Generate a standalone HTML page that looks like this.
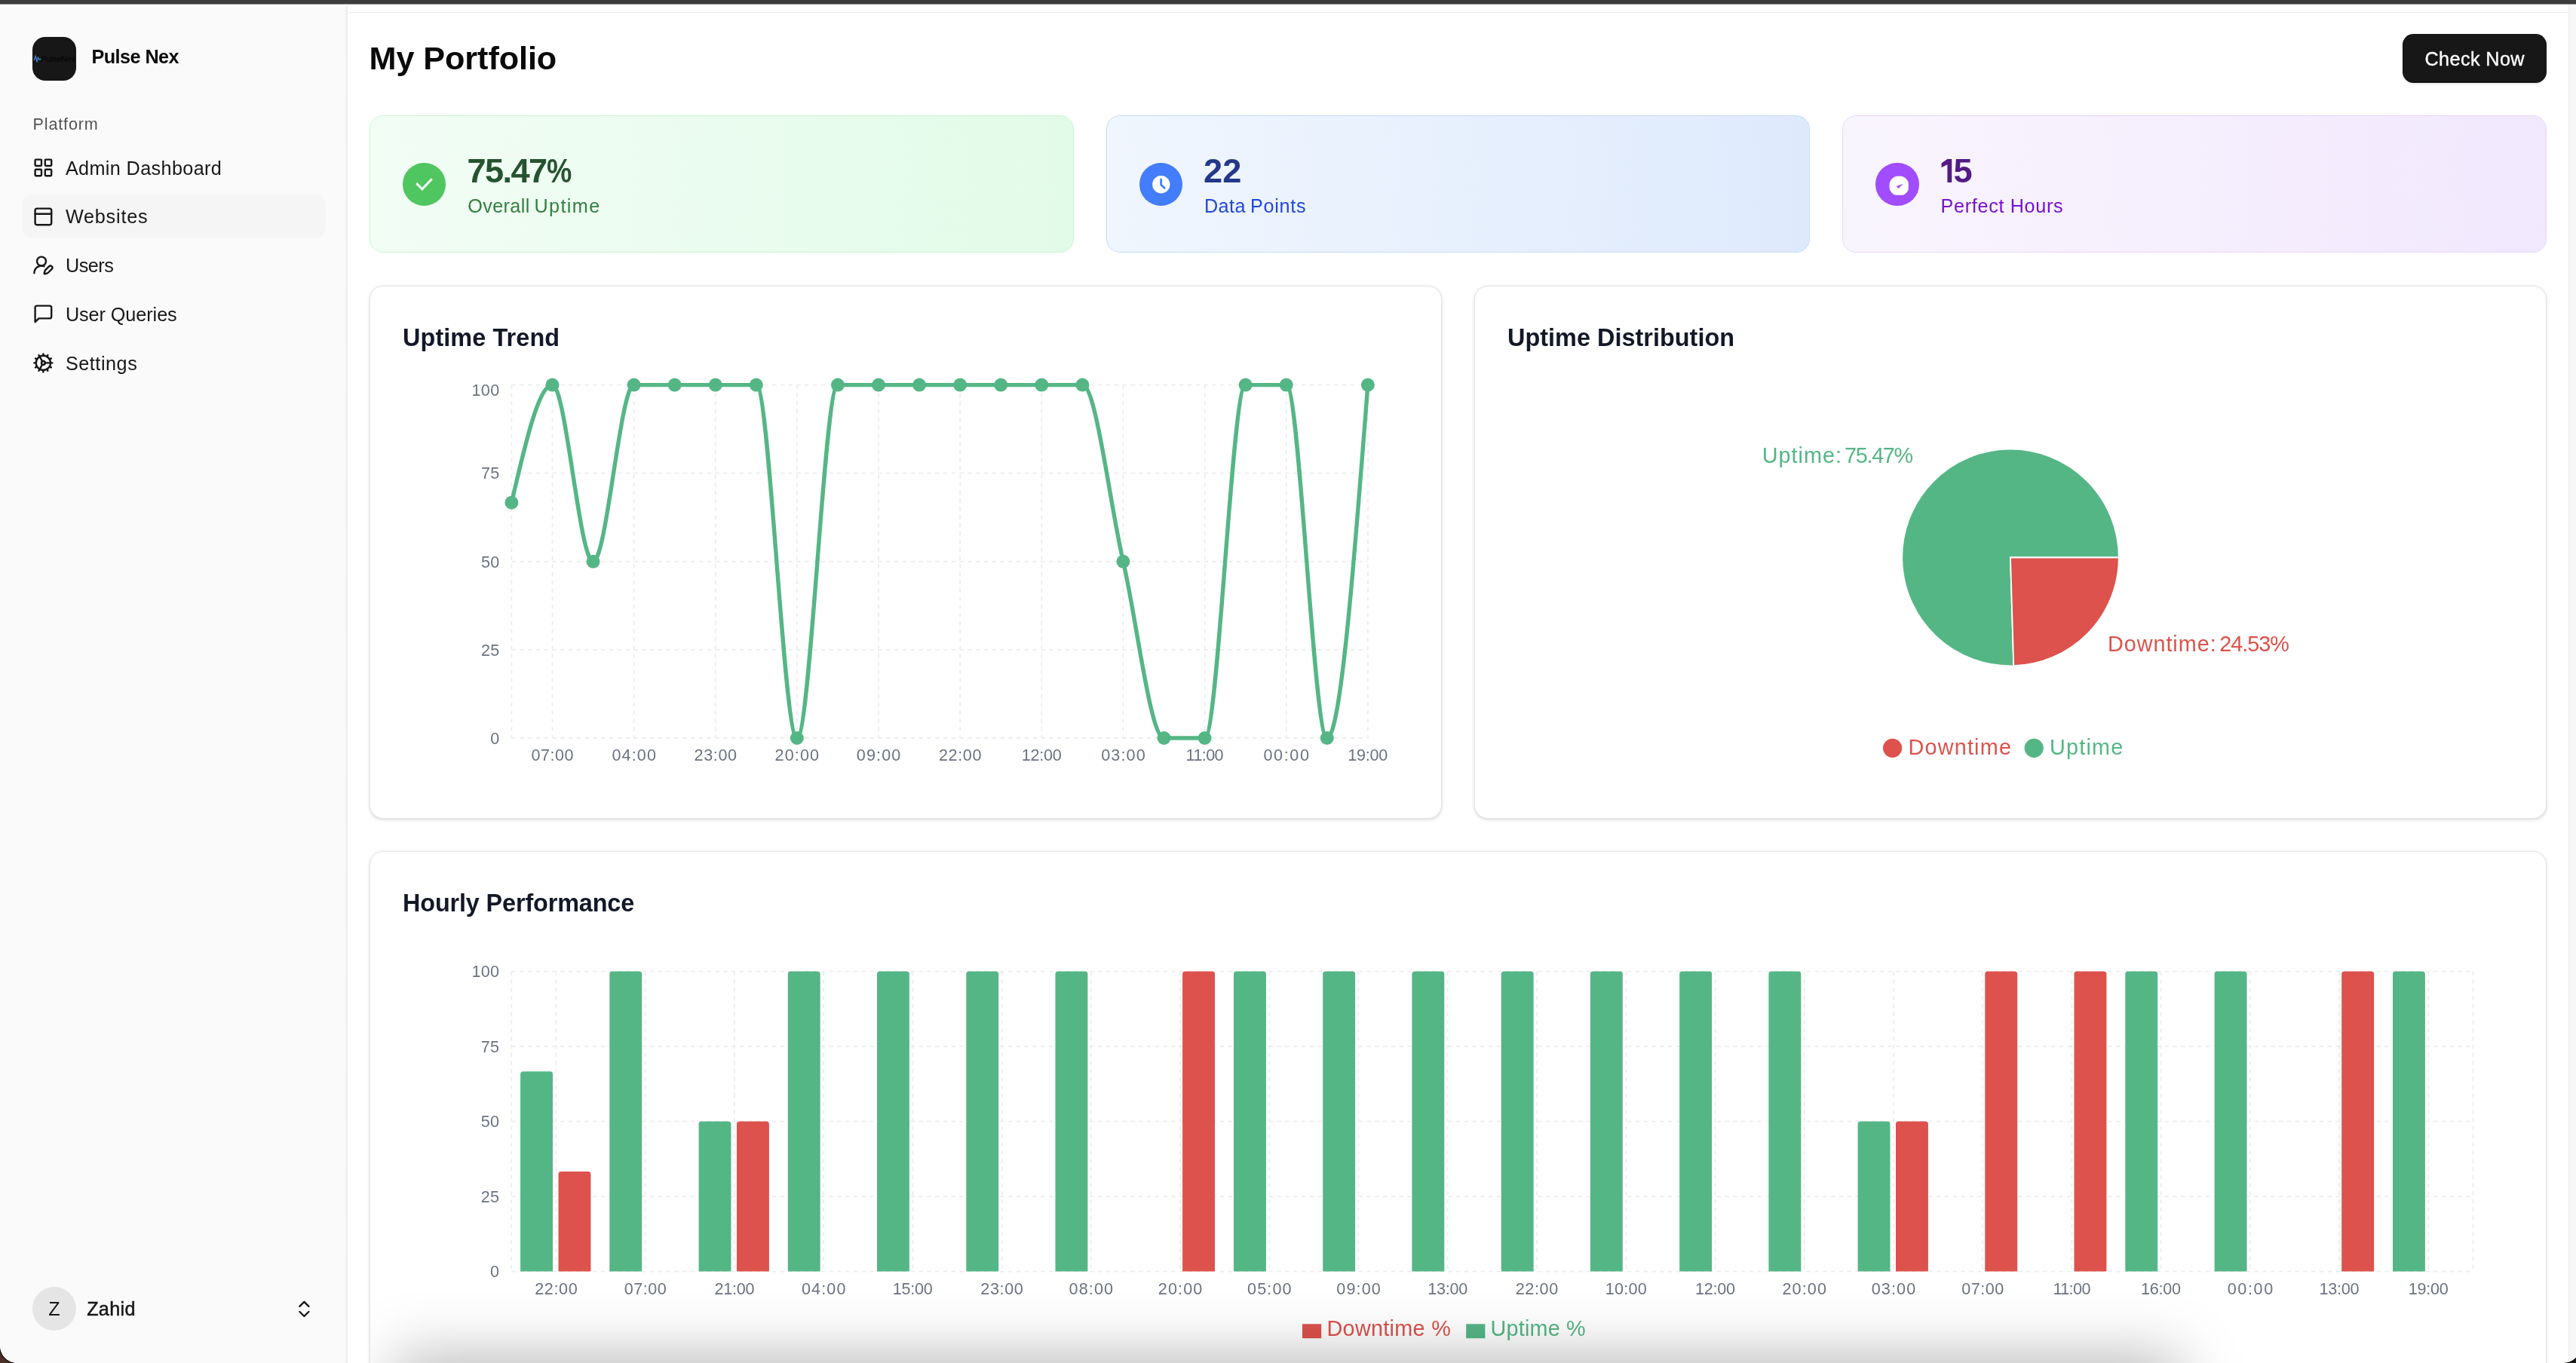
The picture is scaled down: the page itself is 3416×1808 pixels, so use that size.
<!DOCTYPE html>
<html><head><meta charset="utf-8"><title>My Portfolio - Pulse Nex</title>
<style>
html,body{margin:0;padding:0;width:3416px;height:1808px;overflow:hidden}
#root{position:relative;width:3416px;height:1808px;overflow:hidden;background:#1b1a18}
body{position:relative;background:#1b1a18;font-family:"Liberation Sans",sans-serif;-webkit-font-smoothing:antialiased}
.abs{position:absolute}
.card{position:absolute;box-sizing:border-box;background:#fff;border:1px solid #e2e4e8;border-radius:18px;box-shadow:0 1.8px 5.4px rgba(0,0,0,0.1),0 1.8px 3.6px -1.8px rgba(0,0,0,0.1)}
.stat{position:absolute;box-sizing:border-box;border-radius:18px;border:1px solid}
.circ{position:absolute;width:57.6px;height:57.6px;border-radius:50%}
</style></head><body><div id="root">

<div class="abs" style="left:0;top:1770px;width:40px;height:38px;background:#4b3029"></div>
<div class="abs" id="win" style="left:0;top:0;width:3421.6px;height:1808px;background:#fff;border-radius:0 0 23px 23px;overflow:hidden;will-change:transform;box-shadow:0 0 1.5px 1px #000">
<div class="abs" style="left:0;top:0;width:3421px;height:5px;background:#3c3c3c"></div>
<div class="abs" style="left:0;top:5px;width:3421px;height:1px;background:#858686"></div>
<div class="abs" style="left:0;top:6.5px;width:461px;height:1804px;background:linear-gradient(to right,#fafafa 0,#fafafa 457px,#f3f3f3 459px,#ebebeb 461px)"></div>
<div class="abs" style="left:461px;top:16px;width:2945px;height:1px;background:#eeeeee"></div>
<div class="abs" style="left:3406px;top:6px;width:15px;height:1804px;background:#f7f7f7;border-left:1px solid #ededed;box-sizing:border-box"></div>
<div class="abs" style="left:43px;top:49px;width:58px;height:58px;border-radius:17px;background:#171717"></div>
<svg class="abs" style="left:43px;top:49px" width="58" height="58" viewBox="0 0 58 58"><path d="M2.5 30.5 L4 25 L6 33 L7.5 27 L9 30 L11 29.5" fill="none" stroke="#3f7fc4" stroke-width="1.4" stroke-linejoin="round" stroke-linecap="round"/><text x="11.5" y="32.5" font-family="Liberation Sans" font-size="10" font-weight="400" fill="#050505" textLength="45.5" lengthAdjust="spacingAndGlyphs">PulseNex</text></svg>
<div style="position:absolute;top:62.67px;font-size:25.2px;line-height:25.2px;color:#0a0a0a;font-weight:700;white-space:pre;letter-spacing:-0.55px;left:121.50px;">Pulse Nex</div>
<div style="position:absolute;top:153.72px;font-size:21.6px;line-height:21.6px;color:#545454;font-weight:400;white-space:pre;letter-spacing:0.85px;left:43.50px;">Platform</div>
<div class="abs" style="left:29px;top:258.2px;width:403px;height:57.6px;border-radius:14.4px;background:#f5f5f5"></div>
<svg style="position:absolute;left:43.2px;top:207.8px" width="28.8" height="28.8" viewBox="0 0 24 24" fill="none" stroke="#171717" stroke-width="2" stroke-linecap="round" stroke-linejoin="round"><rect width="7" height="7" x="3" y="3" rx="1"/><rect width="7" height="7" x="14" y="3" rx="1"/><rect width="7" height="7" x="14" y="14" rx="1"/><rect width="7" height="7" x="3" y="14" rx="1"/></svg>
<div style="position:absolute;top:210.57px;font-size:25.2px;line-height:25.2px;color:#171717;font-weight:400;white-space:pre;letter-spacing:0.38px;left:86.90px;">Admin Dashboard</div>
<svg style="position:absolute;left:43.2px;top:272.6px" width="28.8" height="28.8" viewBox="0 0 24 24" fill="none" stroke="#171717" stroke-width="2" stroke-linecap="round" stroke-linejoin="round"><rect width="18" height="18" x="3" y="3" rx="2"/><path d="M3 9h18"/></svg>
<div style="position:absolute;top:275.37px;font-size:25.2px;line-height:25.2px;color:#171717;font-weight:400;white-space:pre;letter-spacing:0.8px;left:86.90px;">Websites</div>
<svg style="position:absolute;left:43.2px;top:337.4px" width="28.8" height="28.8" viewBox="0 0 24 24" fill="none" stroke="#171717" stroke-width="2" stroke-linecap="round" stroke-linejoin="round"><path d="M2 21a8 8 0 0 1 10.821-7.487"/><path d="M21.378 16.626a1 1 0 0 0-3.004-3.004l-4.01 4.012a2 2 0 0 0-.506.854l-.837 2.87a.5.5 0 0 0 .62.62l2.87-.837a2 2 0 0 0 .854-.506z"/><circle cx="10" cy="8" r="5"/></svg>
<div style="position:absolute;top:340.17px;font-size:25.2px;line-height:25.2px;color:#171717;font-weight:400;white-space:pre;letter-spacing:-0.45px;left:86.90px;">Users</div>
<svg style="position:absolute;left:43.2px;top:402.2px" width="28.8" height="28.8" viewBox="0 0 24 24" fill="none" stroke="#171717" stroke-width="2" stroke-linecap="round" stroke-linejoin="round"><path d="M21 15a2 2 0 0 1-2 2H7l-4 4V5a2 2 0 0 1 2-2h14a2 2 0 0 1 2 2z"/></svg>
<div style="position:absolute;top:404.97px;font-size:25.2px;line-height:25.2px;color:#171717;font-weight:400;white-space:pre;letter-spacing:-0.05px;left:86.90px;">User Queries</div>
<svg style="position:absolute;left:43.2px;top:467.0px" width="28.8" height="28.8" viewBox="0 0 24 24" fill="none" stroke="#171717" stroke-width="2" stroke-linecap="round" stroke-linejoin="round"><path d="M12 20a8 8 0 1 0 0-16 8 8 0 0 0 0 16Z"/><path d="M12 14a2 2 0 1 0 0-4 2 2 0 0 0 0 4Z"/><path d="M12 2v2"/><path d="M12 22v-2"/><path d="m17 20.66-1-1.73"/><path d="M11 10.27 7 3.34"/><path d="m20.66 17-1.73-1"/><path d="m3.34 7 1.73 1"/><path d="M14 12h8"/><path d="M2 12h2"/><path d="m20.66 7-1.73 1"/><path d="m3.34 17 1.73-1"/><path d="m17 3.34-1 1.73"/><path d="m11 13.73-4 6.93"/></svg>
<div style="position:absolute;top:469.77px;font-size:25.2px;line-height:25.2px;color:#171717;font-weight:400;white-space:pre;letter-spacing:0.55px;left:86.90px;">Settings</div>
<div class="abs" style="left:43px;top:1707px;width:58px;height:58px;border-radius:50%;background:#e5e5e5"></div>
<div style="position:absolute;top:1723.77px;font-size:25.2px;line-height:25.2px;color:#171717;font-weight:400;white-space:pre;left:-428.00px;width:1000px;text-align:center;">Z</div>
<div style="position:absolute;top:1723.77px;font-size:25.2px;line-height:25.2px;color:#171717;font-weight:400;white-space:pre;letter-spacing:0.3px;left:115.20px;-webkit-text-stroke:0.5px #171717;">Zahid</div>
<svg style="position:absolute;left:389px;top:1722px" width="28.8" height="28.8" viewBox="0 0 24 24" fill="none" stroke="#171717" stroke-width="2" stroke-linecap="round" stroke-linejoin="round"><path d="m7 15 5 5 5-5"/><path d="m7 9 5-5 5 5"/></svg>
<div style="position:absolute;top:56.33px;font-size:43.2px;line-height:43.2px;color:#0a0a0a;font-weight:700;white-space:pre;letter-spacing:-0.07px;left:489.50px;">My Portfolio</div>
<div class="abs" style="left:3186px;top:45px;width:191px;height:64.6px;border-radius:14.4px;background:#171717;box-shadow:0 2px 3px rgba(0,0,0,0.08)"></div>
<div style="position:absolute;top:65.87px;font-size:25.2px;line-height:25.2px;color:#fafafa;font-weight:400;white-space:pre;letter-spacing:0.4px;left:2781.50px;width:1000px;text-align:center;text-indent:0.4px;-webkit-text-stroke:0.4px #fafafa;">Check Now</div>
<div class="stat" style="left:490.0px;top:153px;width:933.5px;height:182px;background:linear-gradient(to right,#f2fdf5,#e2fbe8);border-color:#c6f6d2"></div>
<div class="circ" style="left:533.8px;top:215.7px;background:#4fc65f"></div>
<svg class="abs" style="left:533.8px;top:215.7px" width="57.6" height="57.6" viewBox="0 0 57.6 57.6"><path d="M19.3 28.2 L25.9 34.8 L37.8 22.3" fill="none" stroke="#fff" stroke-width="3" stroke-linecap="square" stroke-linejoin="miter"/></svg>
<div style="position:absolute;top:203.84px;font-size:45.2px;line-height:45.2px;color:#26532f;font-weight:700;white-space:pre;letter-spacing:-1.6px;left:619.40px;">75.47<span style="display:inline-block;transform:scaleX(0.83);transform-origin:0 50%;margin-left:1.0px">%</span></div>
<div style="position:absolute;top:260.97px;font-size:25.2px;line-height:25.2px;color:#33803f;font-weight:400;white-space:pre;letter-spacing:0.63px;left:620.20px;"><span style="letter-spacing:0.38px">Overall</span><span style="letter-spacing:1.4px;margin-left:-2.6px"> Uptime</span></div>
<div class="stat" style="left:1466.7px;top:153px;width:933.5px;height:182px;background:linear-gradient(to right,#f0f6fe,#deeafc);border-color:#c4dafc"></div>
<div class="circ" style="left:1510.5px;top:215.7px;background:#447dfc"></div>
<svg class="abs" style="left:1510.5px;top:215.7px" width="57.6" height="57.6" viewBox="0 0 57.6 57.6"><circle cx="28.8" cy="28.7" r="11.7" fill="#fff"/><path d="M28.7 22.0 V29.3 L33.2 33.3" fill="none" stroke="#447dfc" stroke-width="2.8" stroke-linecap="round" stroke-linejoin="round"/></svg>
<div style="position:absolute;top:203.84px;font-size:45.2px;line-height:45.2px;color:#233889;font-weight:700;white-space:pre;left:1596.10px;">22</div>
<div style="position:absolute;top:260.97px;font-size:25.2px;line-height:25.2px;color:#2346dd;font-weight:400;white-space:pre;letter-spacing:0.48px;left:1596.90px;">Data<span style="letter-spacing:0.7px;margin-left:-1.7px"> Points</span></div>
<div class="stat" style="left:2443.4px;top:153px;width:933.5px;height:182px;background:linear-gradient(to right,#f9f5fe,#f1e8fd);border-color:#e6d5fd"></div>
<div class="circ" style="left:2487.2px;top:215.7px;background:#a14dfd"></div>
<svg class="abs" style="left:2487.2px;top:215.7px" width="57.6" height="57.6" viewBox="0 0 57.6 57.6"><defs><clipPath id="gclip"><rect x="18.5" y="17.5" width="25.3" height="25.3"/></clipPath></defs><circle cx="31.3" cy="30.6" r="13.3" fill="#fff" clip-path="url(#gclip)"/><path d="M27.7 31 L37 27.7 L30.4 34 Z" fill="#a14dfd"/></svg>
<svg class="abs" style="left:2570.7px;top:205px" width="24" height="42" viewBox="0 0 24 42"><path d="M11.4 5.9 H17.2 V37 H11.4 V13.3 L3.6 17.3 V11.6 Z" fill="#521b86"/></svg>
<div style="position:absolute;top:203.84px;font-size:45.2px;line-height:45.2px;color:#521b86;font-weight:700;white-space:pre;left:2590.60px;">5</div>
<div style="position:absolute;top:260.97px;font-size:25.2px;line-height:25.2px;color:#7711d2;font-weight:400;white-space:pre;letter-spacing:0.67px;left:2573.60px;">Perfect Hours</div>
<div class="card" style="left:490px;top:379px;width:1421.9px;height:706.5px"></div>
<div class="card" style="left:1955.1px;top:379px;width:1421.9px;height:706.5px"></div>
<div class="card" style="left:490px;top:1129px;width:2887px;height:760px"></div>
<div style="position:absolute;top:431.97px;font-size:32.4px;line-height:32.4px;color:#121827;font-weight:700;white-space:pre;letter-spacing:0.1px;left:534.00px;">Uptime Trend</div>
<div style="position:absolute;top:431.97px;font-size:32.4px;line-height:32.4px;color:#121827;font-weight:700;white-space:pre;letter-spacing:0.03px;left:1999.00px;">Uptime Distribution</div>
<div style="position:absolute;top:1181.77px;font-size:32.4px;line-height:32.4px;color:#121827;font-weight:700;white-space:pre;letter-spacing:-0.14px;left:534.00px;">Hourly Performance</div>
<svg class="abs" style="left:0;top:0" width="3416" height="1808" viewBox="0 0 3416 1808" font-family="Liberation Sans, sans-serif"><path d="M678.4 979.0H1813.9M678.4 861.9H1813.9M678.4 744.8H1813.9M678.4 627.7H1813.9M678.4 510.6H1813.9M678.4 510.6V979.0M732.5 510.6V979.0M840.6 510.6V979.0M948.8 510.6V979.0M1056.9 510.6V979.0M1165.0 510.6V979.0M1273.2 510.6V979.0M1381.3 510.6V979.0M1489.4 510.6V979.0M1597.6 510.6V979.0M1705.7 510.6V979.0M1813.9 510.6V979.0" fill="none" stroke="#ededed" stroke-width="1.8" stroke-dasharray="5.4 5.4"/>
<text x="662.5" y="986.7" font-size="21.6" fill="#6b7281" text-anchor="end" letter-spacing="0.3">0</text>
<text x="662.5" y="869.6" font-size="21.6" fill="#6b7281" text-anchor="end" letter-spacing="0.3">25</text>
<text x="662.5" y="752.5" font-size="21.6" fill="#6b7281" text-anchor="end" letter-spacing="0.3">50</text>
<text x="662.5" y="635.4" font-size="21.6" fill="#6b7281" text-anchor="end" letter-spacing="0.3">75</text>
<text x="662.5" y="525.3" font-size="21.6" fill="#6b7281" text-anchor="end" letter-spacing="0.3">100</text>
<text x="732.7" y="1008.8" font-size="21.6" fill="#6b7281" text-anchor="middle" letter-spacing="0.5">07:00</text>
<text x="841.2" y="1008.8" font-size="21.6" fill="#6b7281" text-anchor="middle" letter-spacing="1.12">04:00</text>
<text x="949.1" y="1008.8" font-size="21.6" fill="#6b7281" text-anchor="middle" letter-spacing="0.62">23:00</text>
<text x="1057.4" y="1008.8" font-size="21.6" fill="#6b7281" text-anchor="middle" letter-spacing="1.12">20:00</text>
<text x="1165.6" y="1008.8" font-size="21.6" fill="#6b7281" text-anchor="middle" letter-spacing="1.12">09:00</text>
<text x="1273.5" y="1008.8" font-size="21.6" fill="#6b7281" text-anchor="middle" letter-spacing="0.62">22:00</text>
<text x="1381.2" y="1008.8" font-size="21.6" fill="#6b7281" text-anchor="middle" letter-spacing="-0.25">12:00</text>
<text x="1490.0" y="1008.8" font-size="21.6" fill="#6b7281" text-anchor="middle" letter-spacing="1.12">03:00</text>
<text x="1597.3" y="1008.8" font-size="21.6" fill="#6b7281" text-anchor="middle" letter-spacing="-0.6">11:00</text>
<text x="1706.5" y="1008.8" font-size="21.6" fill="#6b7281" text-anchor="middle" letter-spacing="1.62">00:00</text>
<text x="1813.7" y="1008.8" font-size="21.6" fill="#6b7281" text-anchor="middle" letter-spacing="-0.25">19:00</text>
<path d="M678.40,666.72C696.42,588.66,714.45,510.60,732.47,510.60C750.49,510.60,768.52,744.80,786.54,744.80C804.56,744.80,822.59,510.60,840.61,510.60C858.63,510.60,876.66,510.60,894.68,510.60C912.70,510.60,930.73,510.60,948.75,510.60C966.77,510.60,984.80,510.60,1002.82,510.60C1020.84,510.60,1038.87,979.00,1056.89,979.00C1074.91,979.00,1092.94,510.60,1110.96,510.60C1128.98,510.60,1147.01,510.60,1165.03,510.60C1183.05,510.60,1201.08,510.60,1219.10,510.60C1237.12,510.60,1255.15,510.60,1273.17,510.60C1291.19,510.60,1309.22,510.60,1327.24,510.60C1345.26,510.60,1363.29,510.60,1381.31,510.60C1399.33,510.60,1417.36,510.60,1435.38,510.60C1453.40,510.60,1471.43,666.73,1489.45,744.80C1507.47,822.87,1525.50,979.00,1543.52,979.00C1561.54,979.00,1579.57,979.00,1597.59,979.00C1615.61,979.00,1633.64,510.60,1651.66,510.60C1669.68,510.60,1687.71,510.60,1705.73,510.60C1723.75,510.60,1741.78,979.00,1759.80,979.00C1777.82,979.00,1795.85,744.80,1813.87,510.60" fill="none" stroke="#55b685" stroke-width="5.4" stroke-linejoin="round" stroke-linecap="butt"/>
<circle cx="678.40" cy="666.72" r="9" fill="#55b685"/>
<circle cx="732.47" cy="510.60" r="9" fill="#55b685"/>
<circle cx="786.54" cy="744.80" r="9" fill="#55b685"/>
<circle cx="840.61" cy="510.60" r="9" fill="#55b685"/>
<circle cx="894.68" cy="510.60" r="9" fill="#55b685"/>
<circle cx="948.75" cy="510.60" r="9" fill="#55b685"/>
<circle cx="1002.82" cy="510.60" r="9" fill="#55b685"/>
<circle cx="1056.89" cy="979.00" r="9" fill="#55b685"/>
<circle cx="1110.96" cy="510.60" r="9" fill="#55b685"/>
<circle cx="1165.03" cy="510.60" r="9" fill="#55b685"/>
<circle cx="1219.10" cy="510.60" r="9" fill="#55b685"/>
<circle cx="1273.17" cy="510.60" r="9" fill="#55b685"/>
<circle cx="1327.24" cy="510.60" r="9" fill="#55b685"/>
<circle cx="1381.31" cy="510.60" r="9" fill="#55b685"/>
<circle cx="1435.38" cy="510.60" r="9" fill="#55b685"/>
<circle cx="1489.45" cy="744.80" r="9" fill="#55b685"/>
<circle cx="1543.52" cy="979.00" r="9" fill="#55b685"/>
<circle cx="1597.59" cy="979.00" r="9" fill="#55b685"/>
<circle cx="1651.66" cy="510.60" r="9" fill="#55b685"/>
<circle cx="1705.73" cy="510.60" r="9" fill="#55b685"/>
<circle cx="1759.80" cy="979.00" r="9" fill="#55b685"/>
<circle cx="1813.87" cy="510.60" r="9" fill="#55b685"/>
<path d="M2809.80,739.50A143.8,143.8,0,1,0,2670.25,883.24L2666.0,739.5Z" fill="#55b685" stroke="#fff" stroke-width="1.8"/>
<path d="M2670.25,883.24A143.8,143.8,0,0,0,2809.80,739.50L2666.0,739.5Z" fill="#dd524c" stroke="#fff" stroke-width="1.8"/>
<text x="2535.9" y="613.5" font-size="28.8" fill="#55b685" text-anchor="end"><tspan letter-spacing="1.0">Uptime:</tspan><tspan letter-spacing="-1.3" dx="-3.6"> 75.47%</tspan></text>
<text x="2795" y="864.2" font-size="28.8" fill="#dd524c"><tspan letter-spacing="0.95">Downtime:</tspan><tspan letter-spacing="-1.03" dx="-3.2"> 24.53%</tspan></text>
<circle cx="2509.6" cy="992.3" r="12.6" fill="#dd524c"/>
<text x="2530.5" y="1000.7" font-size="28.8" fill="#dd524c" letter-spacing="1.2">Downtime</text>
<circle cx="2697.2" cy="992.3" r="12.6" fill="#55b685"/>
<text x="2718.0" y="1000.7" font-size="28.8" fill="#55b685" letter-spacing="1.2">Uptime</text>
<path d="M678.3 1686.6H3279.5M678.3 1587.1H3279.5M678.3 1487.6H3279.5M678.3 1388.1H3279.5M678.3 1288.6H3279.5M678.3 1288.6V1686.6M737.4 1288.6V1686.6M855.7 1288.6V1686.6M973.9 1288.6V1686.6M1092.1 1288.6V1686.6M1210.4 1288.6V1686.6M1328.6 1288.6V1686.6M1446.8 1288.6V1686.6M1565.1 1288.6V1686.6M1683.3 1288.6V1686.6M1801.5 1288.6V1686.6M1919.8 1288.6V1686.6M2038.0 1288.6V1686.6M2156.2 1288.6V1686.6M2274.5 1288.6V1686.6M2392.7 1288.6V1686.6M2510.9 1288.6V1686.6M2629.2 1288.6V1686.6M2747.4 1288.6V1686.6M2865.6 1288.6V1686.6M2983.9 1288.6V1686.6M3102.1 1288.6V1686.6M3220.4 1288.6V1686.6M3279.5 1288.6V1686.6" fill="none" stroke="#ededed" stroke-width="1.8" stroke-dasharray="5.4 5.4"/>
<text x="662.4" y="1694.3" font-size="21.6" fill="#6b7281" text-anchor="end" letter-spacing="0.3">0</text>
<text x="662.4" y="1594.8" font-size="21.6" fill="#6b7281" text-anchor="end" letter-spacing="0.3">25</text>
<text x="662.4" y="1495.3" font-size="21.6" fill="#6b7281" text-anchor="end" letter-spacing="0.3">50</text>
<text x="662.4" y="1395.8" font-size="21.6" fill="#6b7281" text-anchor="end" letter-spacing="0.3">75</text>
<text x="662.4" y="1296.3" font-size="21.6" fill="#6b7281" text-anchor="end" letter-spacing="0.3">100</text>
<path d="M690.1,1686.6V1424.9a3.6,3.6,0,0,1,3.6,-3.6h35.7a3.6,3.6,0,0,1,3.6,3.6V1686.6Z" fill="#55b685"/>
<path d="M740.5,1686.6V1557.5a3.6,3.6,0,0,1,3.6,-3.6h35.7a3.6,3.6,0,0,1,3.6,3.6V1686.6Z" fill="#dd524c"/>
<text x="737.7" y="1717.4" font-size="21.6" fill="#6b7281" text-anchor="middle" letter-spacing="0.62">22:00</text>
<path d="M808.3,1686.6V1292.2a3.6,3.6,0,0,1,3.6,-3.6h35.7a3.6,3.6,0,0,1,3.6,3.6V1686.6Z" fill="#55b685"/>
<text x="855.9" y="1717.4" font-size="21.6" fill="#6b7281" text-anchor="middle" letter-spacing="0.5">07:00</text>
<path d="M926.6,1686.6V1491.2a3.6,3.6,0,0,1,3.6,-3.6h35.7a3.6,3.6,0,0,1,3.6,3.6V1686.6Z" fill="#55b685"/>
<path d="M977.0,1686.6V1491.2a3.6,3.6,0,0,1,3.6,-3.6h35.7a3.6,3.6,0,0,1,3.6,3.6V1686.6Z" fill="#dd524c"/>
<text x="973.8" y="1717.4" font-size="21.6" fill="#6b7281" text-anchor="middle" letter-spacing="-0.25">21:00</text>
<path d="M1044.8,1686.6V1292.2a3.6,3.6,0,0,1,3.6,-3.6h35.7a3.6,3.6,0,0,1,3.6,3.6V1686.6Z" fill="#55b685"/>
<text x="1092.7" y="1717.4" font-size="21.6" fill="#6b7281" text-anchor="middle" letter-spacing="1.12">04:00</text>
<path d="M1163.0,1686.6V1292.2a3.6,3.6,0,0,1,3.6,-3.6h35.7a3.6,3.6,0,0,1,3.6,3.6V1686.6Z" fill="#55b685"/>
<text x="1210.2" y="1717.4" font-size="21.6" fill="#6b7281" text-anchor="middle" letter-spacing="-0.25">15:00</text>
<path d="M1281.3,1686.6V1292.2a3.6,3.6,0,0,1,3.6,-3.6h35.7a3.6,3.6,0,0,1,3.6,3.6V1686.6Z" fill="#55b685"/>
<text x="1328.9" y="1717.4" font-size="21.6" fill="#6b7281" text-anchor="middle" letter-spacing="0.62">23:00</text>
<path d="M1399.5,1686.6V1292.2a3.6,3.6,0,0,1,3.6,-3.6h35.7a3.6,3.6,0,0,1,3.6,3.6V1686.6Z" fill="#55b685"/>
<text x="1447.4" y="1717.4" font-size="21.6" fill="#6b7281" text-anchor="middle" letter-spacing="1.12">08:00</text>
<path d="M1568.1,1686.6V1292.2a3.6,3.6,0,0,1,3.6,-3.6h35.7a3.6,3.6,0,0,1,3.6,3.6V1686.6Z" fill="#dd524c"/>
<text x="1565.6" y="1717.4" font-size="21.6" fill="#6b7281" text-anchor="middle" letter-spacing="1.12">20:00</text>
<path d="M1636.0,1686.6V1292.2a3.6,3.6,0,0,1,3.6,-3.6h35.7a3.6,3.6,0,0,1,3.6,3.6V1686.6Z" fill="#55b685"/>
<text x="1683.9" y="1717.4" font-size="21.6" fill="#6b7281" text-anchor="middle" letter-spacing="1.12">05:00</text>
<path d="M1754.2,1686.6V1292.2a3.6,3.6,0,0,1,3.6,-3.6h35.7a3.6,3.6,0,0,1,3.6,3.6V1686.6Z" fill="#55b685"/>
<text x="1802.1" y="1717.4" font-size="21.6" fill="#6b7281" text-anchor="middle" letter-spacing="1.12">09:00</text>
<path d="M1872.4,1686.6V1292.2a3.6,3.6,0,0,1,3.6,-3.6h35.7a3.6,3.6,0,0,1,3.6,3.6V1686.6Z" fill="#55b685"/>
<text x="1919.6" y="1717.4" font-size="21.6" fill="#6b7281" text-anchor="middle" letter-spacing="-0.25">13:00</text>
<path d="M1990.7,1686.6V1292.2a3.6,3.6,0,0,1,3.6,-3.6h35.7a3.6,3.6,0,0,1,3.6,3.6V1686.6Z" fill="#55b685"/>
<text x="2038.3" y="1717.4" font-size="21.6" fill="#6b7281" text-anchor="middle" letter-spacing="0.62">22:00</text>
<path d="M2108.9,1686.6V1292.2a3.6,3.6,0,0,1,3.6,-3.6h35.7a3.6,3.6,0,0,1,3.6,3.6V1686.6Z" fill="#55b685"/>
<text x="2156.4" y="1717.4" font-size="21.6" fill="#6b7281" text-anchor="middle" letter-spacing="0.25">10:00</text>
<path d="M2227.2,1686.6V1292.2a3.6,3.6,0,0,1,3.6,-3.6h35.7a3.6,3.6,0,0,1,3.6,3.6V1686.6Z" fill="#55b685"/>
<text x="2274.3" y="1717.4" font-size="21.6" fill="#6b7281" text-anchor="middle" letter-spacing="-0.25">12:00</text>
<path d="M2345.4,1686.6V1292.2a3.6,3.6,0,0,1,3.6,-3.6h35.7a3.6,3.6,0,0,1,3.6,3.6V1686.6Z" fill="#55b685"/>
<text x="2393.3" y="1717.4" font-size="21.6" fill="#6b7281" text-anchor="middle" letter-spacing="1.12">20:00</text>
<path d="M2463.6,1686.6V1491.2a3.6,3.6,0,0,1,3.6,-3.6h35.7a3.6,3.6,0,0,1,3.6,3.6V1686.6Z" fill="#55b685"/>
<path d="M2514.0,1686.6V1491.2a3.6,3.6,0,0,1,3.6,-3.6h35.7a3.6,3.6,0,0,1,3.6,3.6V1686.6Z" fill="#dd524c"/>
<text x="2511.5" y="1717.4" font-size="21.6" fill="#6b7281" text-anchor="middle" letter-spacing="1.12">03:00</text>
<path d="M2632.3,1686.6V1292.2a3.6,3.6,0,0,1,3.6,-3.6h35.7a3.6,3.6,0,0,1,3.6,3.6V1686.6Z" fill="#dd524c"/>
<text x="2629.4" y="1717.4" font-size="21.6" fill="#6b7281" text-anchor="middle" letter-spacing="0.5">07:00</text>
<path d="M2750.5,1686.6V1292.2a3.6,3.6,0,0,1,3.6,-3.6h35.7a3.6,3.6,0,0,1,3.6,3.6V1686.6Z" fill="#dd524c"/>
<text x="2747.1" y="1717.4" font-size="21.6" fill="#6b7281" text-anchor="middle" letter-spacing="-0.6">11:00</text>
<path d="M2818.3,1686.6V1292.2a3.6,3.6,0,0,1,3.6,-3.6h35.7a3.6,3.6,0,0,1,3.6,3.6V1686.6Z" fill="#55b685"/>
<text x="2865.5" y="1717.4" font-size="21.6" fill="#6b7281" text-anchor="middle" letter-spacing="-0.25">16:00</text>
<path d="M2936.6,1686.6V1292.2a3.6,3.6,0,0,1,3.6,-3.6h35.7a3.6,3.6,0,0,1,3.6,3.6V1686.6Z" fill="#55b685"/>
<text x="2984.7" y="1717.4" font-size="21.6" fill="#6b7281" text-anchor="middle" letter-spacing="1.62">00:00</text>
<path d="M3105.2,1686.6V1292.2a3.6,3.6,0,0,1,3.6,-3.6h35.7a3.6,3.6,0,0,1,3.6,3.6V1686.6Z" fill="#dd524c"/>
<text x="3102.0" y="1717.4" font-size="21.6" fill="#6b7281" text-anchor="middle" letter-spacing="-0.25">13:00</text>
<path d="M3173.0,1686.6V1292.2a3.6,3.6,0,0,1,3.6,-3.6h35.7a3.6,3.6,0,0,1,3.6,3.6V1686.6Z" fill="#55b685"/>
<text x="3220.2" y="1717.4" font-size="21.6" fill="#6b7281" text-anchor="middle" letter-spacing="-0.25">19:00</text>
<rect x="1727" y="1756.3" width="25.2" height="18.9" fill="#dd524c"/>
<text x="1759.5" y="1771.5" font-size="28.8" fill="#dd524c" letter-spacing="0.3">Downtime %</text>
<rect x="1944.2" y="1756.3" width="25.2" height="18.9" fill="#55b685"/>
<text x="1976.5" y="1771.5" font-size="28.8" fill="#55b685" letter-spacing="0.2">Uptime %</text></svg>
<div class="abs" style="left:491px;top:1129.5px;width:2885px;height:758px;border-radius:17px;overflow:hidden"><div class="abs" style="left:34px;top:668.5px;width:2365px;height:300px;background:rgba(0,0,0,0.27);filter:blur(40px)"></div></div>
</div>
</div></body></html>
